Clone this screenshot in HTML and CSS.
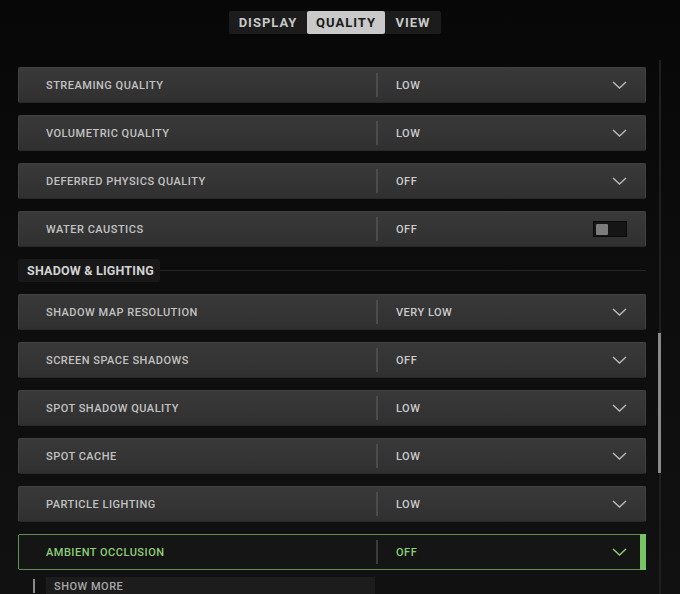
FILE: index.html
```html
<!DOCTYPE html>
<html lang="en">
<head>
  <meta charset="UTF-8">
  <meta name="viewport" content="width=device-width, initial-scale=1.0">
  <title>Graphics - Quality</title>
  <link rel="stylesheet" href="styles.css">
</head>
<body>
  <div class="tabs">
    <div class="tab">DISPLAY</div>
    <div class="tab active">QUALITY</div>
    <div class="tab">VIEW</div>
  </div>

  <div class="settings">
    <div class="row">
      <span class="label">STREAMING QUALITY</span>
      <span class="divider"></span>
      <span class="value">LOW</span>
      <svg class="chevron" width="15" height="8" viewBox="0 0 15 8"><polyline points="1,1 7.5,7 14,1"/></svg>
    </div>
    <div class="row">
      <span class="label">VOLUMETRIC QUALITY</span>
      <span class="divider"></span>
      <span class="value">LOW</span>
      <svg class="chevron" width="15" height="8" viewBox="0 0 15 8"><polyline points="1,1 7.5,7 14,1"/></svg>
    </div>
    <div class="row">
      <span class="label">DEFERRED PHYSICS QUALITY</span>
      <span class="divider"></span>
      <span class="value">OFF</span>
      <svg class="chevron" width="15" height="8" viewBox="0 0 15 8"><polyline points="1,1 7.5,7 14,1"/></svg>
    </div>
    <div class="row">
      <span class="label">WATER CAUSTICS</span>
      <span class="divider"></span>
      <span class="value">OFF</span>
      <span class="toggle"><span class="knob"></span></span>
    </div>

    <div class="section">
      <span class="section-title">SHADOW &amp; LIGHTING</span>
      <span class="section-line"></span>
    </div>

    <div class="row">
      <span class="label">SHADOW MAP RESOLUTION</span>
      <span class="divider"></span>
      <span class="value">VERY LOW</span>
      <svg class="chevron" width="15" height="8" viewBox="0 0 15 8"><polyline points="1,1 7.5,7 14,1"/></svg>
    </div>
    <div class="row">
      <span class="label">SCREEN SPACE SHADOWS</span>
      <span class="divider"></span>
      <span class="value">OFF</span>
      <svg class="chevron" width="15" height="8" viewBox="0 0 15 8"><polyline points="1,1 7.5,7 14,1"/></svg>
    </div>
    <div class="row">
      <span class="label">SPOT SHADOW QUALITY</span>
      <span class="divider"></span>
      <span class="value">LOW</span>
      <svg class="chevron" width="15" height="8" viewBox="0 0 15 8"><polyline points="1,1 7.5,7 14,1"/></svg>
    </div>
    <div class="row">
      <span class="label">SPOT CACHE</span>
      <span class="divider"></span>
      <span class="value">LOW</span>
      <svg class="chevron" width="15" height="8" viewBox="0 0 15 8"><polyline points="1,1 7.5,7 14,1"/></svg>
    </div>
    <div class="row">
      <span class="label">PARTICLE LIGHTING</span>
      <span class="divider"></span>
      <span class="value">LOW</span>
      <svg class="chevron" width="15" height="8" viewBox="0 0 15 8"><polyline points="1,1 7.5,7 14,1"/></svg>
    </div>
    <div class="row selected">
      <span class="label">AMBIENT OCCLUSION</span>
      <span class="divider"></span>
      <span class="value">OFF</span>
      <svg class="chevron" width="15" height="8" viewBox="0 0 15 8"><polyline points="1,1 7.5,7 14,1"/></svg>
    </div>

    <div class="more">
      <span class="more-mark"></span>
      <span class="more-box">SHOW MORE</span>
    </div>
  </div>

  <div class="scrollbar"><div class="thumb"></div></div>
</body>
</html>
```

FILE: styles.css
```css
* {
  margin: 0;
  padding: 0;
  box-sizing: border-box;
}

body {
  width: 680px;
  height: 594px;
  overflow: hidden;
  font-family: 'Roboto', 'Liberation Sans', sans-serif;
  font-weight: 500;
  color: #c6c6c6;
  background: linear-gradient(180deg, #070707 0%, #0c0c0c 40%, #111 100%);
  position: relative;
}

/* top tab bar */
.tabs {
  display: flex;
  width: 212px;
  height: 23px;
  margin: 11px 0 0 229px;
  background: #1c1c1c;
  border-radius: 2px;
}

.tab {
  display: flex;
  align-items: center;
  justify-content: center;
  width: 78px;
  font-size: 13px;
  font-weight: 700;
  letter-spacing: 1px;
  color: #c8c8c8;
}

.tab:last-child {
  width: 56px;
}

.tab.active {
  background: #c9c9c9;
  color: #1a1a1a;
  border-radius: 2px;
}

/* settings list */
.settings {
  display: flex;
  flex-direction: column;
  gap: 12px;
  width: 628px;
  margin: 33px 0 0 18px;
}

.row {
  display: grid;
  grid-template-columns: 357px 2px 1fr auto;
  align-items: center;
  height: 36px;
  background: linear-gradient(180deg, #393939, #303030);
  border: 1px solid #414141;
  border-bottom-color: #282828;
  border-radius: 2px;
  font-size: 11px;
  letter-spacing: 0.5px;
}

.label {
  padding-left: 27px;
  color: #c2c2c2;
}

.divider {
  width: 2px;
  height: 24px;
  background: #4c4c4c;
}

.value {
  padding-left: 18px;
  color: #cbcbcb;
}

.chevron {
  margin-right: 18px;
  fill: none;
  stroke: #bbb;
  stroke-width: 1.4;
}

.toggle {
  display: flex;
  align-items: center;
  width: 34px;
  height: 16px;
  margin-right: 18px;
  padding: 0 2px;
  background: #151515;
  border: 1px solid #0a0a0a;
}

.knob {
  width: 12px;
  height: 11px;
  background: #7c7c7c;
  border-radius: 1px;
}

/* section header */
.section {
  display: flex;
  align-items: center;
  height: 23px;
}

.section-title {
  display: flex;
  align-items: center;
  height: 23px;
  padding: 0 9px;
  width: 142px;
  background: #181818;
  border-radius: 2px;
  font-size: 12.5px;
  font-weight: 700;
  letter-spacing: 0.2px;
  color: #d2d2d2;
  white-space: nowrap;
}

.section-line {
  flex: 1;
  height: 1px;
  background: #262626;
}

/* highlighted row */
.row.selected {
  position: relative;
  background: #151515;
  border: 1px solid #5f8f52;
}

.row.selected .label,
.row.selected .value {
  color: #8fcf78;
}

.row.selected .divider {
  background: #3a3a3a;
}

.row.selected .chevron {
  stroke: #8fcf78;
}

.row.selected::after {
  content: "";
  position: absolute;
  right: -1px;
  top: -1px;
  bottom: -1px;
  width: 6px;
  background: #78c464;
}

/* show more stub */
.more {
  display: flex;
  align-items: flex-start;
  height: 20px;
  margin-top: -5px;
}

.more-mark {
  width: 2px;
  height: 14px;
  margin: 2px 0 0 15px;
  background: #8a8a8a;
}

.more-box {
  width: 329px;
  height: 20px;
  margin-left: 11px;
  padding: 3px 0 0 8px;
  background: #1c1c1c;
  font-size: 11px;
  letter-spacing: 0.5px;
  color: #a8a8a8;
}

/* scrollbar */
.scrollbar {
  position: absolute;
  left: 659px;
  top: 60px;
  bottom: 0;
  width: 2px;
  background: #1f1f1f;
}

.thumb {
  position: absolute;
  left: -1px;
  top: 273px;
  width: 3px;
  height: 140px;
  background: #8a8a8a;
}
```
